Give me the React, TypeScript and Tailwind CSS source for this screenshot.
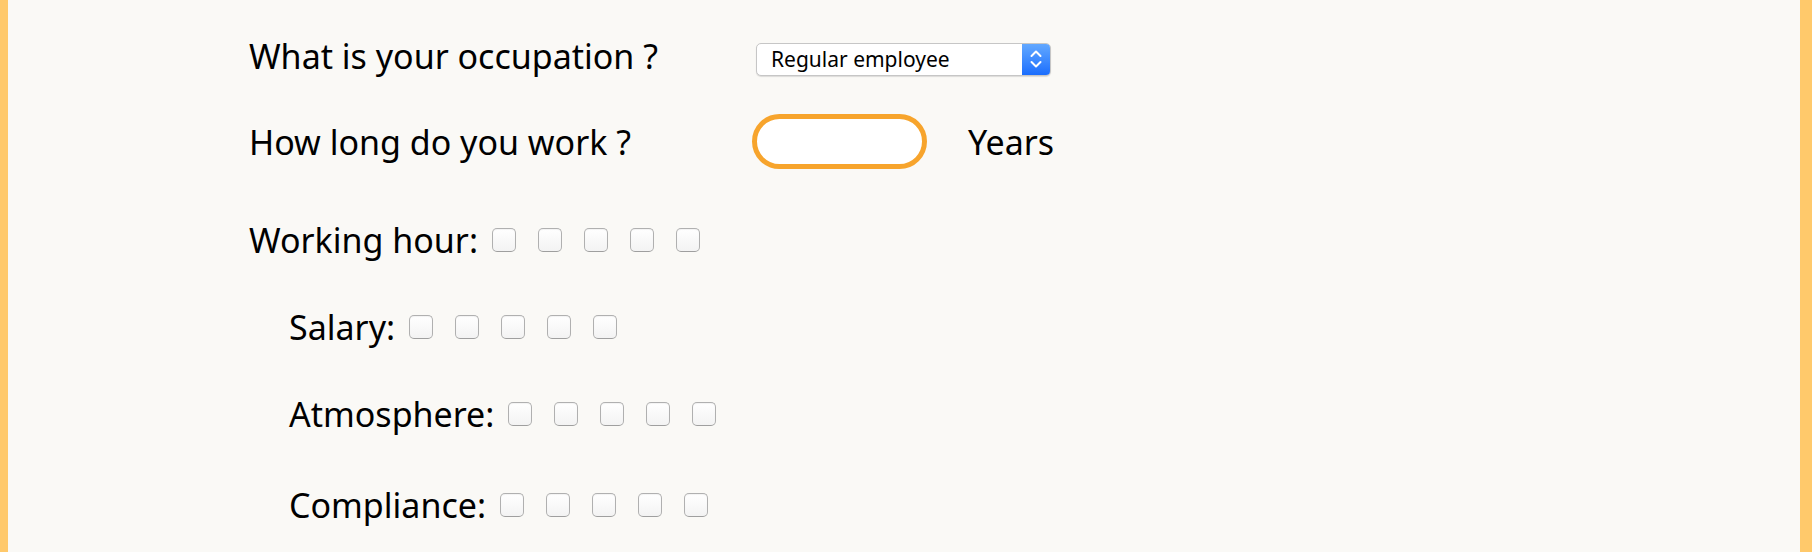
import { ReactNode } from "react";

const font = { fontFamily: '"Noto Sans", "Liberation Sans", sans-serif' };

const Box = () => (
  <input
    type="checkbox"
    className="h-[24px] w-[24px] shrink-0 appearance-none rounded-[5px] border border-[#b0b0b0] border-b-[#9f9f9f] bg-gradient-to-b from-white to-[#f3f3f3] shadow-[inset_0_1px_1px_rgba(0,0,0,0.05)]"
  />
);

const Scale = ({ label, indent }: { label: string; indent?: boolean }) => (
  <div className={`flex items-center ${indent ? "pl-[40px]" : ""}`}>
    <span className="mr-[14px]">{label}</span>
    <div className="flex gap-[22px]">
      {[1, 2, 3, 4, 5].map((n) => (
        <Box key={n} />
      ))}
    </div>
  </div>
);

const Row = ({ children, className }: { children: ReactNode; className: string }) => (
  <div className={`flex items-center ${className}`}>{children}</div>
);

export default function App() {
  return (
    <div
      className="flex h-[552px] w-full border-l-[8px] border-r-[12px] border-[#ffc96b] bg-[#faf9f6] text-[34px] leading-none text-black"
      style={font}
    >
      <div className="ml-[241px] flex flex-col">
        {/* occupation */}
        <Row className="mt-[38px] h-[36px]">
          <span className="w-[507px]">What is your occupation ?</span>
          <div className="mt-[6px] flex h-[33px] w-[295px] overflow-hidden rounded-[5px] border border-[#c6c6c6] bg-white shadow-[0_1px_1px_rgba(0,0,0,0.12)]">
            <div className="flex flex-1 items-center pl-[14px] text-[21px]">Regular employee</div>
            <div className="flex w-[28px] flex-col items-center justify-center bg-gradient-to-b from-[#62a8ff] to-[#1a6dfd]">
              <svg width="16" height="24" viewBox="0 0 16 24" fill="none" stroke="white" strokeWidth="2" strokeLinecap="round" strokeLinejoin="round">
                <path d="M3.5 9 L8 4.5 L12.5 9" />
                <path d="M3.5 15 L8 19.5 L12.5 15" />
              </svg>
            </div>
          </div>
        </Row>

        {/* years */}
        <Row className="mt-[40px] h-[55px]">
          <span className="w-[503px]">How long do you work ?</span>
          <input
            type="text"
            className="h-[55px] w-[175px] rounded-full border-[5px] border-[#f7a42c] bg-white px-4 outline-none"
          />
          <span className="ml-[41px]">Years</span>
        </Row>

        <div className="mt-[54px]">
          <Scale label="Working hour:" />
        </div>
        <div className="mt-[53px]">
          <Scale label="Salary:" indent />
        </div>
        <div className="mt-[53px]">
          <Scale label="Atmosphere:" indent />
        </div>
        <div className="mt-[57px]">
          <Scale label="Compliance:" indent />
        </div>
      </div>
    </div>
  );
}
